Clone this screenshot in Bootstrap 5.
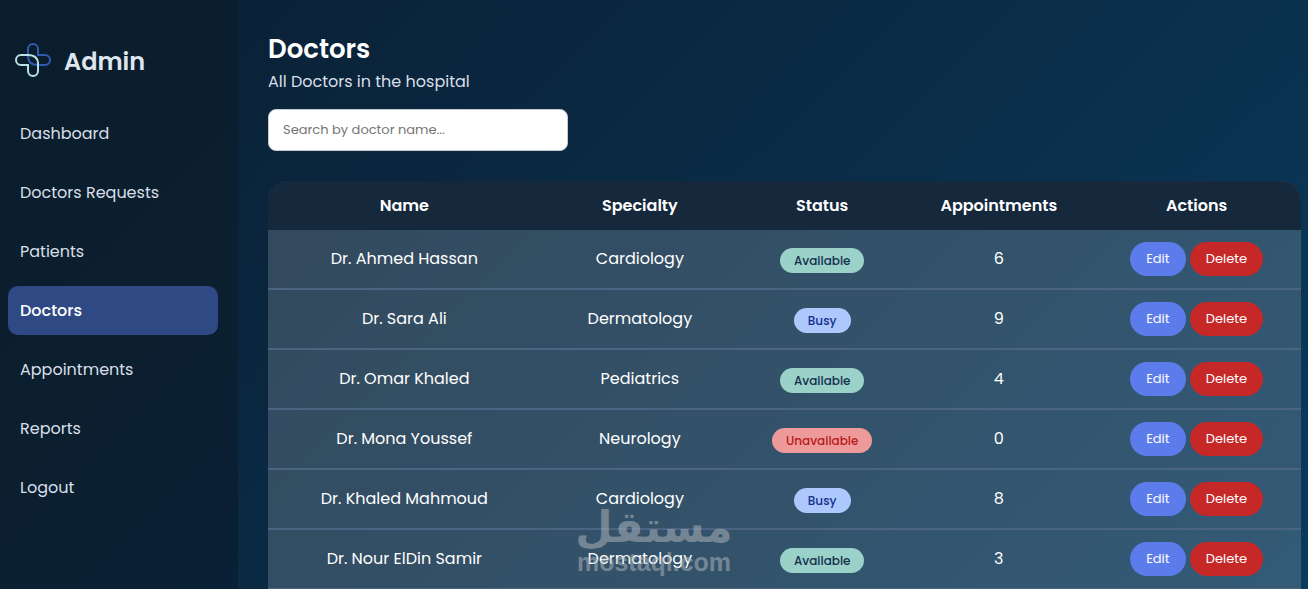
<!DOCTYPE html>
<html lang="en">
<head>
<meta charset="utf-8">
<meta name="viewport" content="width=device-width, initial-scale=1">
<title>Admin - Doctors</title>
<link href="https://cdn.jsdelivr.net/npm/bootstrap@5.3.0/dist/css/bootstrap.min.css" rel="stylesheet">
<style>
body { font-family: Poppins, Inter, "Liberation Sans", sans-serif; font-size: 16px; line-height: 24px; color: #fff; background: #0a2540; }
.shell { background: linear-gradient(135deg, #0a1f33 0%, #0a263e 30%, #0a3a5c 100%); }
.sidebar { width: 238px; padding: 41px 20px 0 8px; background: linear-gradient(135deg, #0b1d2c, #0b1f2f 60%, #0a2036); }
.brand { color: #dfe6f0; font-size: 24px; line-height: 42px; font-weight: 600; padding-left: 6px; margin-bottom: 26px; gap: 12px; }
.side-nav { gap: 10px; }
.side-link { display: block; padding: 12px; line-height: 25px; border-radius: 10px; color: #d8dfe8; text-decoration: none; font-size: 16px; }
.side-link:hover { color: #fff; }
.side-link.active { background: #2f4985; color: #fff; font-weight: 500; }
.content { padding: 29px 7px 0 30px; scrollbar-width: none; }
.content::-webkit-scrollbar { display: none; }
.page-title { font-size: 26px; line-height: 40px; font-weight: 600; }
.subtitle { color: #d8dfe8; font-size: 16px; line-height: 26px; margin-bottom: 14px; }
.search-box { width: 300px; height: 42px; padding: 0 14px; border: 1px solid #c3c9d6; border-radius: 8px; font-size: 13px; margin-bottom: 30px; background: #fff; }
.search-box::placeholder { color: #757575; }
.doctors { border-radius: 20px 20px 0 0; background: rgba(255,255,255,.17); }
.doctors table { table-layout: fixed; border-collapse: separate; border-spacing: 0; }
.doctors th, .doctors td { text-align: center; vertical-align: middle; padding: 0; }
.doctors th { height: 49px; background: #15283c; font-weight: 600; }
.doctors td { height: 60px; line-height: 26px; border-bottom: 2px solid #4b6482; }
.c-name { width: 26.4%; } .c-spec { width: 19.2%; } .c-stat { width: 16.1%; } .c-appt { width: 18.1%; }
.status { display: inline-block; padding: 0 14px; border-radius: 20px; font-size: 12px; line-height: 25px; font-weight: 500; margin-top: 2px; vertical-align: middle; }
.available { background: #9ad1c9; color: #14304d; }
.busy { background: #adc8fc; color: #14308c; }
.unavailable { background: #ef9a9a; color: #b71c1c; }
.act { border: 0; border-radius: 20px; height: 34px; padding: 0 16px; font-size: 13px; font-weight: 400; color: #fff; }
.edit { background: #5c7cec; } .del { background: #c62828; }
.watermark { position: absolute; left: 50%; bottom: 15px; transform: translateX(-50%); text-align: center; color: #b4b9bd; opacity: .5; pointer-events: none; }
.wm-ar { font: bold 43px/46px "DejaVu Sans", sans-serif; }
.wm-en { font: bold 25px/24px "Liberation Sans", sans-serif; }
</style>
</head>
<body>
<div class="shell d-flex vh-100 overflow-hidden position-relative">
  <aside class="sidebar flex-shrink-0">
    <div class="brand d-flex align-items-center">
      <svg width="38" height="38" viewBox="0 2 38 38" fill="none" stroke-width="2" aria-hidden="true">
        <path stroke="#2f5bb0" d="M14 15V8a5 5 0 0 1 10 0v6h7a5 5 0 0 1 0 10h-7c-6 0-10-3-10-9z"/>
        <path stroke="#b4e0e6" d="M14 24H7a5 5 0 0 1 0-10h7c6 0 10 3 10 9v7a5 5 0 0 1-10 0z"/>
      </svg>
      <span>Admin</span>
    </div>
    <nav class="side-nav d-flex flex-column">
      <a class="side-link" href="#">Dashboard</a>
      <a class="side-link" href="#">Doctors Requests</a>
      <a class="side-link" href="#">Patients</a>
      <a class="side-link active" href="#" aria-current="page">Doctors</a>
      <a class="side-link" href="#">Appointments</a>
      <a class="side-link" href="#">Reports</a>
      <a class="side-link" href="#">Logout</a>
    </nav>
  </aside>
  <main class="content flex-grow-1 overflow-auto">
    <h1 class="page-title mb-0">Doctors</h1>
    <p class="subtitle">All Doctors in the hospital</p>
    <input class="search-box d-block" type="text" placeholder="Search by doctor name..." aria-label="Search by doctor name">
    <div class="doctors overflow-hidden">
      <table class="w-100">
        <thead><tr><th class="c-name">Name</th><th class="c-spec">Specialty</th><th class="c-stat">Status</th><th class="c-appt">Appointments</th><th>Actions</th></tr></thead>
        <tbody>
          <tr><td>Dr. Ahmed Hassan</td><td>Cardiology</td><td><span class="status available">Available</span></td><td>6</td><td><button class="act edit">Edit</button> <button class="act del">Delete</button></td></tr>
          <tr><td>Dr. Sara Ali</td><td>Dermatology</td><td><span class="status busy">Busy</span></td><td>9</td><td><button class="act edit">Edit</button> <button class="act del">Delete</button></td></tr>
          <tr><td>Dr. Omar Khaled</td><td>Pediatrics</td><td><span class="status available">Available</span></td><td>4</td><td><button class="act edit">Edit</button> <button class="act del">Delete</button></td></tr>
          <tr><td>Dr. Mona Youssef</td><td>Neurology</td><td><span class="status unavailable">Unavailable</span></td><td>0</td><td><button class="act edit">Edit</button> <button class="act del">Delete</button></td></tr>
          <tr><td>Dr. Khaled Mahmoud</td><td>Cardiology</td><td><span class="status busy">Busy</span></td><td>8</td><td><button class="act edit">Edit</button> <button class="act del">Delete</button></td></tr>
          <tr><td>Dr. Nour ElDin Samir</td><td>Dermatology</td><td><span class="status available">Available</span></td><td>3</td><td><button class="act edit">Edit</button> <button class="act del">Delete</button></td></tr>
        </tbody>
      </table>
    </div>
  </main>
  <div class="watermark"><div class="wm-ar" lang="ar" dir="rtl">مستقل</div><div class="wm-en">mostaql.com</div></div>
</div>
<script src="https://cdn.jsdelivr.net/npm/bootstrap@5.3.0/dist/js/bootstrap.bundle.min.js"></script>
</body>
</html>
